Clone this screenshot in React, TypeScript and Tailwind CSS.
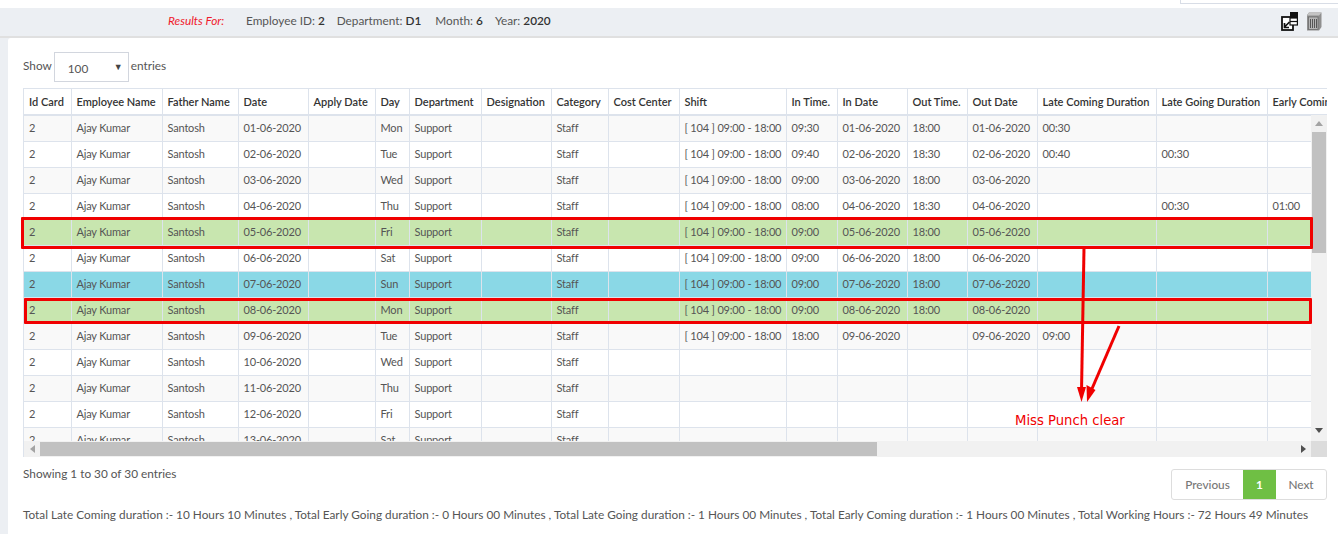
const colClasses = [
  "w-[47px]", "w-[91px]", "w-[76px]", "w-[70px]", "w-[67px]", "w-[34px]", "w-[72px]", "w-[70px]", "w-[57px]",
  "w-[71px]", "w-[107px]", "w-[51px]", "w-[70px]", "w-[60px]", "w-[70px]", "w-[119px]", "w-[111px]", "w-[120px]",
];

const headers = [
  "Id Card", "Employee Name", "Father Name", "Date", "Apply Date", "Day", "Department", "Designation", "Category",
  "Cost Center", "Shift", "In Time.", "In Date", "Out Time.", "Out Date", "Late Coming Duration", "Late Going Duration", "Early Coming Duration",
];

interface Row {
  date: string;
  day: string;
  inTime?: string;
  outTime?: string;
  late?: string;
  lateGoing?: string;
  early?: string;
  hasShift?: boolean;
  outDate?: boolean;
  tone?: "green" | "blue";
}

const rows: Row[] = [
  { date: "01-06-2020", day: "Mon", hasShift: true, inTime: "09:30", outTime: "18:00", outDate: true, late: "00:30" },
  { date: "02-06-2020", day: "Tue", hasShift: true, inTime: "09:40", outTime: "18:30", outDate: true, late: "00:40", lateGoing: "00:30" },
  { date: "03-06-2020", day: "Wed", hasShift: true, inTime: "09:00", outTime: "18:00", outDate: true },
  { date: "04-06-2020", day: "Thu", hasShift: true, inTime: "08:00", outTime: "18:30", outDate: true, lateGoing: "00:30", early: "01:00" },
  { date: "05-06-2020", day: "Fri", hasShift: true, inTime: "09:00", outTime: "18:00", outDate: true, tone: "green" },
  { date: "06-06-2020", day: "Sat", hasShift: true, inTime: "09:00", outTime: "18:00", outDate: true },
  { date: "07-06-2020", day: "Sun", hasShift: true, inTime: "09:00", outTime: "18:00", outDate: true, tone: "blue" },
  { date: "08-06-2020", day: "Mon", hasShift: true, inTime: "09:00", outTime: "18:00", outDate: true, tone: "green" },
  { date: "09-06-2020", day: "Tue", hasShift: true, inTime: "18:00", outDate: true, late: "09:00" },
  { date: "10-06-2020", day: "Wed" },
  { date: "11-06-2020", day: "Thu" },
  { date: "12-06-2020", day: "Fri" },
  { date: "13-06-2020", day: "Sat" },
];

function Cols() {
  return (
    <colgroup>
      {colClasses.map((c, i) => (
        <col key={i} className={c} />
      ))}
    </colgroup>
  );
}

function rowBg(row: Row, index: number) {
  if (row.tone === "green") return "bg-[#c8e6af]";
  if (row.tone === "blue") return "bg-[#8ad8e6]";
  return index % 2 === 0 ? "bg-[#f9f9f9]" : "bg-white";
}

function ExportIcon() {
  return (
    <svg width="17" height="19" viewBox="0 0 17 19">
      <rect x="1" y="5" width="11" height="13" fill="white" stroke="#111" strokeWidth="1.8" />
      <rect x="9" y="0" width="8" height="6" fill="#111" />
      <rect x="9" y="6" width="7.4" height="7" fill="white" stroke="#111" strokeWidth="1.2" />
      <path d="M9 9.5 H16" stroke="#111" strokeWidth="1.2" />
      <path d="M8.5 10 L4 14.5 M3.5 11 V15.5 H8" fill="none" stroke="#111" strokeWidth="1.7" />
    </svg>
  );
}

function TrashIcon() {
  return (
    <svg width="16" height="19" viewBox="0 0 16 19">
      <path d="M3 0.5 H15.5 V15 L13 18.5 H1 V3 Z" fill="#8f8f8f" />
      <path d="M3 0.5 H15.5 L13 3.5 H1 Z" fill="#c4c4c4" />
      <rect x="2.5" y="5" width="9.5" height="12.5" fill="#b5b5b5" stroke="#666" strokeWidth="0.7" />
      <path d="M4.5 7 V16 M6.5 7 V16 M8.5 7 V16 M10.5 7 V16" stroke="#555" strokeWidth="1" />
    </svg>
  );
}

export default function App() {
  return (
    <div className="relative h-[534px] w-[1338px] overflow-hidden bg-[#eceff3] font-['Lato','Open_Sans',sans-serif] text-[11px] text-[#555]">
      {/* top strip */}
      <div className="flex h-2 justify-end bg-white">
        <div className="h-[4px] w-[158px] border-b border-l border-[#d8dde6] bg-white" />
      </div>

      {/* results bar */}
      <div className="flex h-[30px] items-center justify-between border-b-2 border-[#e0e0e0] pb-[2px] pl-[168px] pr-[16px] text-[11.8px]">
        <div className="flex items-center">
          <span className="mr-[24px] w-[54px] whitespace-nowrap italic text-[#f01a2c]">Results For:</span>
          <span className="mr-[12px]">Employee ID: <b className="font-semibold text-[#333]">2</b></span>
          <span className="mr-[14px]">Department: <b className="font-semibold text-[#333]">D1</b></span>
          <span className="mr-[12px]">Month: <b className="font-semibold text-[#333]">6</b></span>
          <span>Year: <b className="font-semibold text-[#333]">2020</b></span>
        </div>
        <div className="flex items-center gap-[8px]">
          <ExportIcon />
          <TrashIcon />
        </div>
      </div>

      {/* card */}
      <div className="ml-2 h-[496px] rounded-tl-[3px] bg-white pl-[15px] pr-[11px] pt-[14px]">
        <div className="flex h-[30px] items-center">
          <span className="-translate-y-[1px] text-[11.8px] leading-none">Show</span>
          <div className="ml-[2px] flex h-[30px] w-[75px] items-center justify-between border border-[#d2d6de] pl-[13px] pr-[5px] text-[11.8px]">
            <span className="translate-y-[2px]">100</span>
            <span className="text-[9px] text-[#444]">▼</span>
          </div>
          <span className="ml-[2px] -translate-y-[1px] text-[11.8px] leading-none">entries</span>
        </div>

        {/* table */}
        <div className="mt-[6px] w-[1304px] border-l border-[#dde3ec]">
          <div className="overflow-hidden">
            <table className="w-[1363px] table-fixed border-collapse">
              <Cols />
              <thead>
                <tr className="h-[26px]">
                  {headers.map((h) => (
                    <th key={h} className="overflow-hidden whitespace-nowrap border border-l-0 border-[#dde3ec] bg-white px-[5px] pt-[1px] text-left font-semibold text-[#333]">
                      {h}
                    </th>
                  ))}
                </tr>
              </thead>
            </table>
          </div>
          <div className="flex">
            <div className="h-[326px] w-[1287px] overflow-hidden">
              <table className="w-[1363px] table-fixed border-collapse">
                <Cols />
                <tbody>
                  {rows.map((r, i) => {
                    const cells = [
                      "2", "Ajay Kumar", "Santosh", r.date, "", r.day, "Support", "", "Staff", "",
                      r.hasShift ? "[ 104 ] 09:00 - 18:00" : "",
                      r.inTime ?? "",
                      r.hasShift ? r.date : "",
                      r.outTime ?? "",
                      r.outDate ? r.date : "",
                      r.late ?? "",
                      r.lateGoing ?? "",
                      r.early ?? "",
                    ];
                    return (
                      <tr key={r.date} className={`h-[26px] ${rowBg(r, i)}`}>
                        {cells.map((c, j) => (
                          <td key={j} className="overflow-hidden whitespace-nowrap border border-l-0 border-[#dde3ec] px-[5px] tabular-nums tracking-[-0.18px]">
                            {c}
                          </td>
                        ))}
                      </tr>
                    );
                  })}
                </tbody>
              </table>
            </div>
            {/* vertical scrollbar */}
            <div className="flex h-[326px] w-4 flex-col items-center bg-[#f1f1f1]">
              <div className="mt-[6px] h-0 w-0 border-x-[4px] border-b-[5px] border-x-transparent border-b-[#a3a3a3]" />
              <div className="mt-[6px] h-[121px] w-[14px] bg-[#c1c1c1]" />
              <div className="mb-[8px] mt-auto h-0 w-0 border-x-[4px] border-t-[5px] border-x-transparent border-t-[#505050]" />
            </div>
          </div>
          {/* horizontal scrollbar */}
          <div className="flex h-4 bg-[#f1f1f1]">
            <div className="flex w-[16px] items-center justify-center">
              <div className="h-0 w-0 border-y-[4px] border-r-[5px] border-y-transparent border-r-[#a3a3a3]" />
            </div>
            <div className="mt-[1px] h-[14px] w-[837px] bg-[#c1c1c1]" />
            <div className="flex flex-1 items-center justify-end pr-[5px]">
              <div className="h-0 w-0 border-y-[4px] border-l-[5px] border-y-transparent border-l-[#505050]" />
            </div>
            <div className="w-4 bg-[#dcdcdc]" />
          </div>
        </div>

        {/* footer */}
        <div className="mt-[12px] flex w-[1304px] items-start justify-between">
          <span className="-translate-y-[1px] text-[11.8px] leading-[11px]">Showing 1 to 30 of 30 entries</span>
          <div className="flex h-[31px] items-center overflow-hidden rounded-[3px] border border-[#ddd] text-[11.8px] font-medium text-[#777]">
            <span className="flex h-full w-[71px] items-center justify-center">Previous</span>
            <span className="flex h-full w-[33px] items-center justify-center bg-[#6fbf44] font-bold text-white">1</span>
            <span className="flex h-full w-[50px] items-center justify-center">Next</span>
          </div>
        </div>
        <p className="mt-[8px] whitespace-nowrap text-[11.8px] leading-[14px]">
          Total Late Coming duration :- 10 Hours 10 Minutes , Total Early Going duration :- 0 Hours 00 Minutes , Total Late Going duration :- 1 Hours 00 Minutes , Total Early Coming duration :- 1 Hours 00 Minutes , Total Working Hours :- 72 Hours 49 Minutes
        </p>
      </div>

      {/* hand drawn annotations on top of the table */}
      <div className="absolute left-[21px] top-[217px] h-[32px] w-[1292px] rounded-[1px] border-[3px] border-[#f00000]" />
      <div className="absolute left-[24px] top-[298px] h-[26px] w-[1288px] rounded-[1px] border-[3px] border-[#f00000]" />
      <svg className="absolute left-[1070px] top-[246px]" width="60" height="160" viewBox="0 0 60 160">
        <path d="M14 2 L11.5 146" stroke="#f00000" strokeWidth="3" fill="none" />
        <path d="M7 141 H16 L11.5 156 Z" fill="#f00000" />
        <path d="M49 80 L21 145" stroke="#f00000" strokeWidth="3" fill="none" />
        <path d="M16.5 139 L25.5 144 L17 156 Z" fill="#f00000" />
      </svg>
      <span className="absolute left-[1015px] top-[413px] font-['DejaVu_Sans',sans-serif] text-[13.2px] leading-[16px] text-[#f00000]">Miss Punch clear</span>
    </div>
  );
}
